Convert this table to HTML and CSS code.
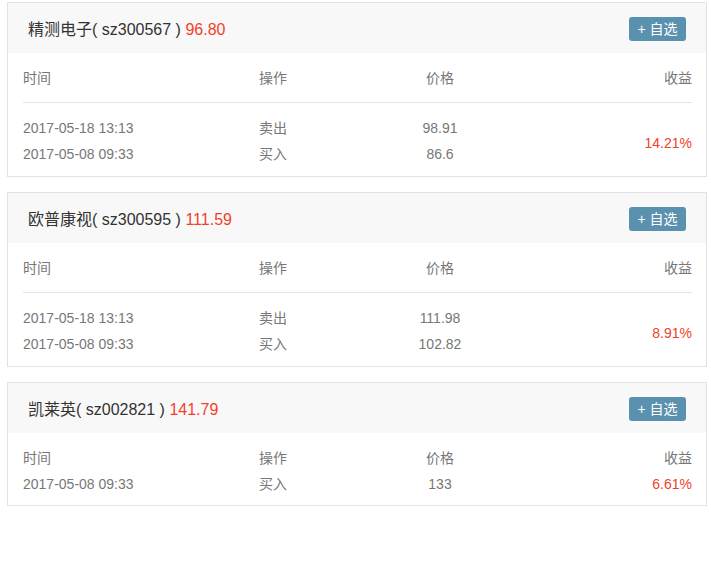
FILE: index.html
```html
<!DOCTYPE html>
<html lang="zh-CN">
<head>
<meta charset="utf-8">
<title>交易记录</title>
<link rel="stylesheet" href="styles.css">
</head>
<body>
<div class="list">
  <section class="card">
    <div class="card-head">
      <div class="title">精测电子( sz300567 ) <span class="red">96.80</span></div>
      <button class="btn">+ 自选</button>
    </div>
    <div class="card-body">
      <div class="grid">
        <div class="th">时间</div><div class="th">操作</div><div class="th c">价格</div><div class="th r">收益</div>
      </div>
      <div class="sep"></div>
      <div class="grid rows2">
        <div class="td">2017-05-18 13:13</div><div class="td">卖出</div><div class="td c">98.91</div>
        <div class="td r red span2">14.21%</div>
        <div class="td">2017-05-08 09:33</div><div class="td">买入</div><div class="td c">86.6</div>
      </div>
    </div>
  </section>

  <section class="card">
    <div class="card-head">
      <div class="title">欧普康视( sz300595 ) <span class="red">111.59</span></div>
      <button class="btn">+ 自选</button>
    </div>
    <div class="card-body">
      <div class="grid">
        <div class="th">时间</div><div class="th">操作</div><div class="th c">价格</div><div class="th r">收益</div>
      </div>
      <div class="sep"></div>
      <div class="grid rows2">
        <div class="td">2017-05-18 13:13</div><div class="td">卖出</div><div class="td c">111.98</div>
        <div class="td r red span2">8.91%</div>
        <div class="td">2017-05-08 09:33</div><div class="td">买入</div><div class="td c">102.82</div>
      </div>
    </div>
  </section>

  <section class="card">
    <div class="card-head">
      <div class="title">凯莱英( sz002821 ) <span class="red">141.79</span></div>
      <button class="btn">+ 自选</button>
    </div>
    <div class="card-body">
      <div class="grid">
        <div class="th">时间</div><div class="th">操作</div><div class="th c">价格</div><div class="th r">收益</div>
        <div class="td">2017-05-08 09:33</div><div class="td">买入</div><div class="td c">133</div><div class="td r red">6.61%</div>
      </div>
    </div>
  </section>
</div>
</body>
</html>
```

FILE: styles.css
```css
* { box-sizing: border-box; }
html, body { margin: 0; padding: 0; background: #fff; }
body {
  font-family: "Liberation Sans", Arial, "Noto Sans CJK SC", sans-serif;
  font-size: 14px;
  color: #777;
}
.list {
  width: 700px;
  margin: 2px 0 0 7px;
  display: flex;
  flex-direction: column;
  gap: 15px;
}
.card {
  border: 1px solid #e3e3e3;
  background: #fff;
}
.card-head {
  height: 50px;
  background: #f8f8f8;
  display: flex;
  align-items: center;
  justify-content: space-between;
  padding: 0 20px 0 20px;
}
.title {
  font-size: 16px;
  color: #333;
  white-space: pre;
  margin-top: -1px;
}
.red { color: #f1412c; }
.btn {
  height: 24px;
  width: 57px;
  border: 0;
  border-radius: 3px;
  background: #5a91ae;
  color: #fff;
  font-family: inherit;
  font-size: 14px;
  padding: 0;
  line-height: 24px;
  margin-top: 1px;
}
.card-body {
  padding: 12px 14px 8px 15px;
}
.grid {
  display: grid;
  grid-template-columns: 236px 121px 120px 1fr;
  grid-auto-rows: 26px;
  align-items: center;
}
.rows2 { grid-template-rows: 26px 26px; margin-bottom: 1px; }
.th, .td { line-height: 26px; white-space: nowrap; }
.c { text-align: center; }
.r { text-align: right; }
.span2 { grid-column: 4; grid-row: 1 / span 2; padding-top: 4px; }
.sep {
  height: 1px;
  background: #e5e5e5;
  margin: 11px 0 12px;
}
```
